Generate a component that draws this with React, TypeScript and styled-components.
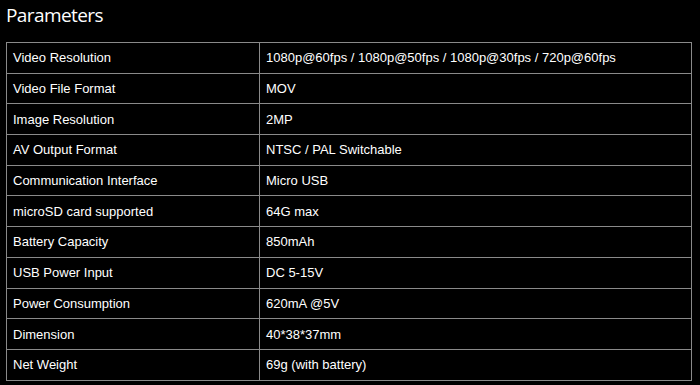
import React from "react";
import styled, { createGlobalStyle } from "styled-components";

const GlobalStyle = createGlobalStyle`
	html, body {
		margin: 0;
		padding: 0;
		background: #000;
	}
`;

const Page = styled.div`
	width: 700px;
	height: 385px;
	background: #000;
	padding: 0 8px 0 6px;
	box-sizing: border-box;
	overflow: hidden;
`;

const Title = styled.h2`
	margin: 0;
	padding-top: 2px;
	height: 42px;
	box-sizing: border-box;
	font-family: "Open Sans", "Noto Sans", sans-serif;
	font-weight: 400;
	font-size: 19px;
	letter-spacing: -0.6px;
	line-height: 26px;
	color: #fff;
`;

const Table = styled.table`
	width: 686px;
	border-collapse: collapse;
	font-family: "Liberation Sans", Arial, sans-serif;
	font-size: 13px;
	color: #fff;
`;

const Row = styled.tr`
	height: 30.7px;
`;

const Cell = styled.td<{ $w?: number }>`
	border: 1px solid #8a8a8a;
	padding: 0 0 0 6px;
	vertical-align: middle;
	width: ${(p) => (p.$w ? `${p.$w}px` : "auto")};
	line-height: 15px;
`;

const specs: [string, string][] = [
	["Video Resolution", "1080p@60fps / 1080p@50fps / 1080p@30fps / 720p@60fps"],
	["Video File Format", "MOV"],
	["Image Resolution", "2MP"],
	["AV Output Format", "NTSC / PAL Switchable"],
	["Communication Interface", "Micro USB"],
	["microSD card supported", "64G max"],
	["Battery Capacity", "850mAh"],
	["USB Power Input", "DC 5-15V"],
	["Power Consumption", "620mA @5V"],
	["Dimension", "40*38*37mm"],
	["Net Weight", "69g (with battery)"],
];

export default function App() {
	return (
		<Page>
			<GlobalStyle />
			<Title>Parameters</Title>
			<Table>
				<tbody>
					{specs.map(([name, value]) => (
						<Row key={name}>
							<Cell $w={246}>{name}</Cell>
							<Cell>{value}</Cell>
						</Row>
					))}
				</tbody>
			</Table>
		</Page>
	);
}
